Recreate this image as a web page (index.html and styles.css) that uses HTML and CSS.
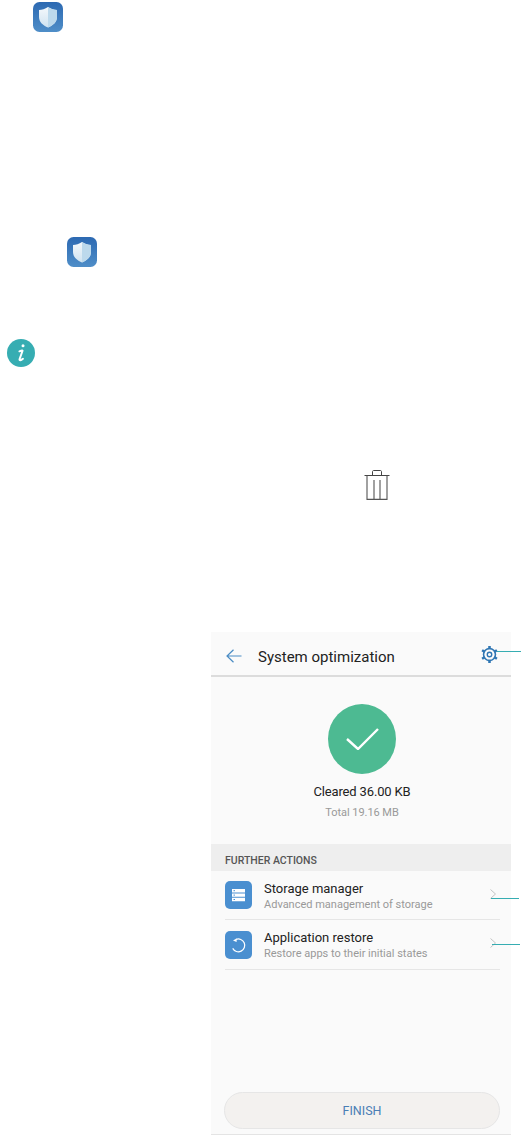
FILE: index.html
```html
<!DOCTYPE html>
<html lang="en">

<head>
  <meta charset="UTF-8">
  <meta name="viewport" content="width=device-width, initial-scale=1.0">
  <title>System optimization</title>
  <link rel="stylesheet" href="styles.css">
</head>

<body>
  <div class="page">
    <svg class="app-icon first" viewBox="0 0 30 30">
      <use href="#shield"></use>
    </svg>
    <svg class="app-icon second" viewBox="0 0 30 30">
      <defs>
        <linearGradient id="blue" x1="0" y1="0" x2="0" y2="1">
          <stop offset="0" stop-color="#2c69b2"></stop>
          <stop offset="1" stop-color="#4f8ec8"></stop>
        </linearGradient>
        <linearGradient id="shield-left" x1="0" y1="0" x2="0" y2="1">
          <stop offset="0" stop-color="#f4f8fb"></stop>
          <stop offset="1" stop-color="#cfe3f1"></stop>
        </linearGradient>
        <g id="shield">
          <rect width="30" height="30" rx="6.5" fill="url(#blue)"></rect>
          <path d="M15 5 C18 7 21 7.8 24 8 V15 C24 20 20 23.5 15 25.5 C10 23.5 6 20 6 15 V8 C9 7.8 12 7 15 5 Z" fill="url(#shield-left)"></path>
          <path d="M15 5 C18 7 21 7.8 24 8 V15 C24 20 20 23.5 15 25.5 Z" fill="#bcd9ec"></path>
        </g>
      </defs>
      <use href="#shield"></use>
    </svg>

    <svg class="info-icon" viewBox="0 0 28 28">
      <circle cx="14" cy="14" r="14" fill="#36adb2"></circle>
      <circle cx="16" cy="6.8" r="1.5" fill="#fff"></circle>
      <path d="M12.4 12.3 C13.6 11.8 15 11.4 15.6 11.6 L12.5 20.4 C12.3 21.6 13.8 21.6 16 19.8" fill="none" stroke="#fff" stroke-width="1.9" stroke-linecap="round" stroke-linejoin="round"></path>
    </svg>

    <svg class="trash-icon" viewBox="0 0 26 30">
      <path d="M0.5 5.5 H25.5 M8.5 5.5 V1.5 C8.5 1 9 0.5 9.5 0.5 H16.5 C17 0.5 17.5 1 17.5 1.5 V5.5" fill="none" stroke="#444" stroke-width="1"></path>
      <path d="M3 5.5 V29.4 H23 V5.5 M10 10 V29 M16 10 V29" fill="none" stroke="#555" stroke-width="1.1"></path>
    </svg>

    <div class="phone">
      <div class="topbar">
        <svg class="back" viewBox="0 0 16 14">
          <path d="M15.5 7 H1 M7.5 0.7 L1 7 L7.5 13.3" fill="none" stroke="#4a8cc4" stroke-width="1.2"></path>
        </svg>
        <span class="title">System optimization</span>
        <svg class="gear" viewBox="0 0 16 16">
          <circle cx="8" cy="8" r="5.6" fill="none" stroke="#2f76b3" stroke-width="1.5"></circle>
          <circle cx="8" cy="8" r="2.1" fill="none" stroke="#2f76b3" stroke-width="1.3"></circle>
          <path d="M8 0 V3 M8 13 V16 M1 4 L3.6 5.5 M12.4 10.5 L15 12 M1 12 L3.6 10.5 M12.4 5.5 L15 4" stroke="#2f76b3" stroke-width="2.4"></path>
        </svg>
      </div>

      <div class="result">
        <div class="check">
          <svg viewBox="0 0 33 22" width="33" height="22">
            <path d="M1 11 L12 21 L32 1" fill="none" stroke="#fff" stroke-width="2.4"></path>
          </svg>
        </div>
        <div class="cleared">Cleared 36.00 KB</div>
        <div class="total">Total 19.16 MB</div>
      </div>

      <div class="section-head">FURTHER ACTIONS</div>

      <div class="row">
        <svg class="row-icon" viewBox="0 0 27 28">
          <rect width="27" height="28" rx="5" fill="#4a8fd0"></rect>
          <path d="M7 8 H20 V11.4 H7 Z M7 12.4 H20 V15.8 H7 Z M7 16.8 H20 V20.2 H7 Z" fill="#fff"></path>
          <path d="M8.5 9.7 H10 M8.5 14.1 H10 M8.5 18.5 H10" stroke="#4a8fd0" stroke-width="1"></path>
        </svg>
        <div class="row-text">
          <div class="row-title">Storage manager</div>
          <div class="row-sub">Advanced management of storage</div>
        </div>
        <svg class="chevron" viewBox="0 0 6 10">
          <path d="M0.5 0.5 L5.5 5 L0.5 9.5" fill="none" stroke="#c4c4c4" stroke-width="1"></path>
        </svg>
      </div>
      <div class="row tall">
        <svg class="row-icon" viewBox="0 0 27 28">
          <rect width="27" height="28" rx="5" fill="#4a8fd0"></rect>
          <path d="M11 8.4 A6.4 6.4 0 1 1 7.7 17.4" fill="none" stroke="#fff" stroke-width="1.2"></path>
          <path d="M8 9.6 L11.6 7.6 L11.6 11 Z" fill="#fff"></path>
        </svg>
        <div class="row-text">
          <div class="row-title">Application restore</div>
          <div class="row-sub">Restore apps to their initial states</div>
        </div>
        <svg class="chevron" viewBox="0 0 6 10">
          <path d="M0.5 0.5 L5.5 5 L0.5 9.5" fill="none" stroke="#c4c4c4" stroke-width="1"></path>
        </svg>
      </div>

      <div class="footer">
        <button class="finish">FINISH</button>
      </div>

      <span class="callout callout-gear"></span>
      <span class="callout callout-storage"></span>
      <span class="callout callout-restore"></span>
    </div>
  </div>
</body>

</html>
```

FILE: styles.css
```css
html,
body {
  margin: 0;
  background-color: #fff;
}

body {
  font-family: Roboto, "Liberation Sans", sans-serif;
  height: 1135px;
  overflow: hidden;
}

.page {
  display: flex;
  flex-direction: column;
  align-items: flex-start;
  padding-top: 2px;
}

.app-icon {
  width: 30px;
  height: 30px;
  flex: none;
}

.app-icon.first {
  margin-left: 33px;
}

.app-icon.second {
  margin: 205px 0 0 67px;
}

.info-icon {
  width: 28px;
  height: 28px;
  flex: none;
  margin: 72px 0 0 7px;
}

.trash-icon {
  width: 26px;
  height: 30px;
  flex: none;
  margin: 103px 0 0 364px;
}

.phone {
  position: relative;
  width: 300px;
  height: 503px;
  margin: 132px 0 0 211px;
  background-color: #fafafa;
  display: flex;
  flex-direction: column;
}

.topbar {
  height: 43px;
  border-bottom: 2px solid #dcdcdc;
  display: flex;
  align-items: center;
  padding: 5px 13px 0 15px;
  box-sizing: content-box;
  margin-top: -5px;
}

.back {
  width: 16px;
  height: 14px;
  margin-right: 16px;
  position: relative;
  top: 2px;
}

.title {
  font-size: 15px;
  color: #222;
  flex: 1;
  padding-top: 6px;
}

.gear {
  width: 17px;
  height: 17px;
  position: relative;
  top: 1px;
}

.result {
  height: 167px;
  display: flex;
  flex-direction: column;
  align-items: center;
  padding-left: 2px;
  box-sizing: border-box;
}

.check {
  width: 68px;
  height: 70px;
  border-radius: 50%;
  background-color: #4dba92;
  margin-top: 27px;
  display: flex;
  align-items: center;
  justify-content: center;
}

.cleared {
  font-size: 13px;
  letter-spacing: -0.15px;
  color: #222;
  margin-top: 9px;
  line-height: 18px;
}

.total {
  font-size: 11px;
  letter-spacing: -0.05px;
  color: #999;
  margin-top: 5px;
  line-height: 14px;
}

.section-head {
  height: 27px;
  line-height: 33px;
  background-color: #eeeeee;
  padding-left: 14px;
  font-size: 10.5px;
  font-weight: 500;
  color: #555;
}

.row {
  height: 48px;
  margin: 0 11px 0 14px;
  padding-right: 4px;
  display: flex;
  align-items: center;
  border-bottom: 1px solid #e6e6e6;
}

.row.tall {
  height: 49px;
}

.row-icon {
  width: 27px;
  height: 28px;
  flex: none;
  margin-right: 12px;
}

.row-text {
  flex: 1;
  padding-top: 1px;
}

.row-title {
  font-size: 13px;
  line-height: 17px;
  color: #222;
}

.row-sub {
  font-size: 11px;
  line-height: 15px;
  color: #999;
}

.chevron {
  width: 6px;
  height: 10px;
  flex: none;
  margin-bottom: 3px;
}

.footer {
  margin-top: auto;
  height: 42px;
  padding: 0 11px 0 13px;
  border-bottom: 1px solid #e4e4e4;
}

.finish {
  display: block;
  width: 100%;
  height: 37px;
  border: 1px solid #e6e6e6;
  border-radius: 19px;
  background-color: #f3f1ef;
  color: #4a7fb5;
  font-family: inherit;
  font-size: 12.5px;
}

.callout {
  position: absolute;
  height: 1px;
  background-color: #36adb2;
}

.callout-gear {
  left: 286px;
  top: 19px;
  width: 24px;
}

.callout-storage {
  left: 280px;
  top: 266px;
  width: 28px;
}

.callout-restore {
  left: 281px;
  top: 312px;
  width: 28px;
}
```
